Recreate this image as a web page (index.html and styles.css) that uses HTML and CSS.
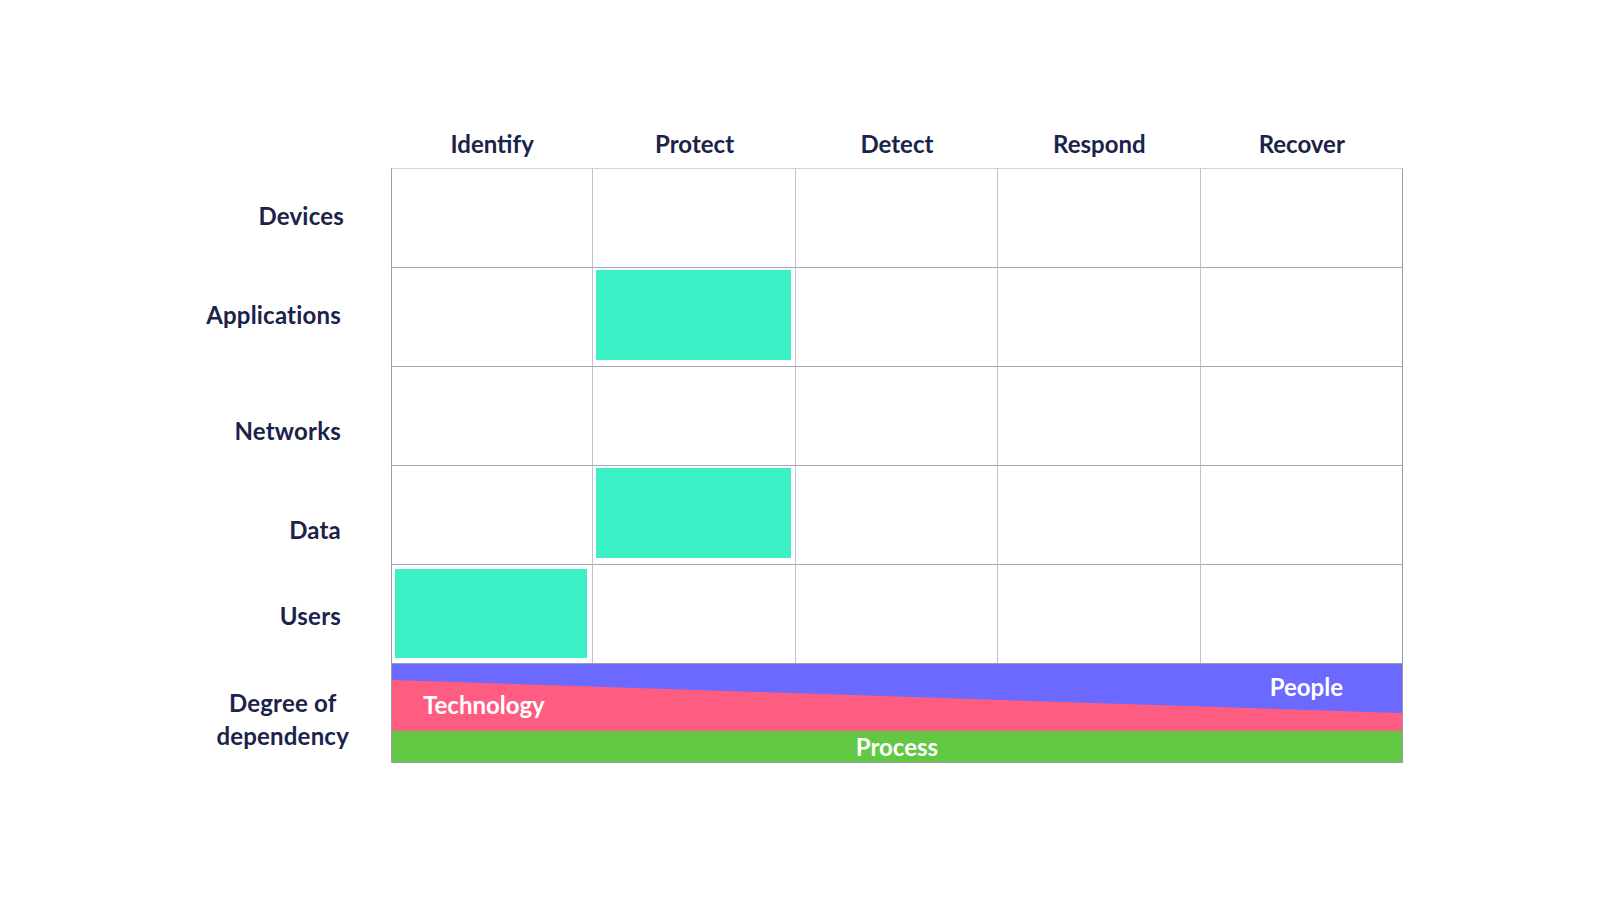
FILE: index.html
```html
<!DOCTYPE html>
<html lang="en">
<head>
    <meta charset="UTF-8">
    <meta name="viewport" content="width=device-width, initial-scale=1.0">
    <title>Cyber Defense Matrix</title>
    <link rel="stylesheet" href="styles.css">
</head>
<body>
    <div class="chart">
        <!-- header row -->
        <div class="corner"></div>
        <div class="head">Identify</div>
        <div class="head">Protect</div>
        <div class="head">Detect</div>
        <div class="head">Respond</div>
        <div class="head">Recover</div>

        <div class="label label-devices">Devices</div>
        <div class="cell first top"></div>
        <div class="cell top"></div>
        <div class="cell top"></div>
        <div class="cell top"></div>
        <div class="cell top last"></div>

        <div class="label">Applications</div>
        <div class="cell first"></div>
        <div class="cell"><div class="fill"></div></div>
        <div class="cell"></div>
        <div class="cell"></div>
        <div class="cell last"></div>

        <div class="label label-low">Networks</div>
        <div class="cell first"></div>
        <div class="cell"></div>
        <div class="cell"></div>
        <div class="cell"></div>
        <div class="cell last"></div>

        <div class="label label-low">Data</div>
        <div class="cell first"></div>
        <div class="cell"><div class="fill"></div></div>
        <div class="cell"></div>
        <div class="cell"></div>
        <div class="cell last"></div>

        <div class="label label-users">Users</div>
        <div class="cell first"><div class="fill fill-users"></div></div>
        <div class="cell"></div>
        <div class="cell"></div>
        <div class="cell"></div>
        <div class="cell last"></div>

        <div class="label label-dep">Degree of<br>dependency</div>
        <div class="bar">
            <div class="mix">
                <span class="tech">Technology</span>
                <span class="people">People</span>
            </div>
            <div class="process">Process</div>
        </div>
    </div>
</body>
</html>
```

FILE: styles.css
```css
*{
    margin: 0;
    padding: 0;
    box-sizing: border-box;
}
body{
    background: #fff;
    font-family: "Lato", "Liberation Sans", sans-serif;
    font-weight: 700;
    color: #1b2349;
}
.chart{
    display: grid;
    grid-template-columns: 201px repeat(5, 202.4px);
    grid-template-rows: 50px repeat(5, 99px) 100px;
    padding-top: 118px;
    margin-left: 190px;
}
.head{
    align-self: end;
    text-align: center;
    font-size: 24px;
    line-height: 24px;
    padding-bottom: 12px;
}
.label{
    font-size: 24px;
    line-height: 24px;
    text-align: right;
    padding-right: 50px;
    padding-top: 36px;
    letter-spacing: 0.2px;
}
.label-devices{
    padding-right: 47px;
}
.label-low{
    padding-top: 53px;
}
.label-users{
    padding-top: 40px;
}
.label-dep{
    justify-self: end;
    text-align: center;
    line-height: 32.5px;
    padding-right: 0;
    margin-right: 42px;
    padding-top: 24px;
}

/* grid cells */
.cell{
    border-right: 1px solid #bfc1cc;
    border-top: 1px solid #a3a6b6;
    padding: 2px 4px 6px 3px;
}
.cell.top{
    border-top-color: #d3d4dc;
}
.cell.first{
    border-left: 1px solid #9a9daf;
}
.cell.last{
    border-right-color: #9a9daf;
}
.fill{
    height: 100%;
    background: #3cf0c5;
}
.fill-users{
    margin-top: 2px;
    height: 89px;
    margin-right: 1px;
}

/* dependency bar */
.bar{
    grid-column: span 5;
    display: flex;
    flex-direction: column;
    border: 1px solid #9a9daf;
}
.mix{
    position: relative;
    height: 67px;
    background: #ff5c82;
    display: flex;
    justify-content: space-between;
    color: #fff;
    font-size: 24px;
    line-height: 24px;
}
.mix::before{
    content: "";
    position: absolute;
    left: 0;
    top: 0;
    right: 0;
    bottom: 0;
    background: #6b69ff;
    clip-path: polygon(0 0, 100% 0, 100% 49px, 0 16px);
}
.tech,.people{
    position: relative;
}
.tech{
    margin-top: 29px;
    margin-left: 31px;
}
.people{
    margin-top: 11px;
    margin-right: 59px;
}
.process{
    flex: 1;
    background: #62c742;
    color: #fff;
    text-align: center;
    font-size: 24px;
    line-height: 31px;
}
```
